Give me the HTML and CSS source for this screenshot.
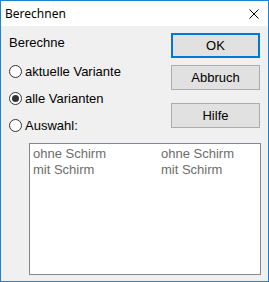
FILE: index.html
```html
<!DOCTYPE html>
<html lang="de">
<head>
  <meta charset="UTF-8" />
  <title>Berechnen</title>
  <link rel="stylesheet" href="styles.css">
</head>
<body>
  <div class="window">
    <div class="titlebar">
      <span class="title">Berechnen</span>
      <svg class="close" width="10" height="10" viewBox="0 0 10 10">
        <path d="M0.5 0.5 L9.5 9.5 M9.5 0.5 L0.5 9.5" stroke="#000" stroke-width="1" fill="none"/>
      </svg>
    </div>

    <div class="content">
      <div class="top">
        <div class="options">
          <div class="label">Berechne</div>
          <div class="radios">
            <div class="radio"><span class="circle"></span><span>aktuelle Variante</span></div>
            <div class="radio"><span class="circle checked"></span><span>alle Varianten</span></div>
            <div class="radio"><span class="circle"></span><span>Auswahl:</span></div>
          </div>
        </div>
        <div class="buttons">
          <button class="btn default">OK</button>
          <button class="btn">Abbruch</button>
          <button class="btn help">Hilfe</button>
        </div>
      </div>

      <div class="listbox">
        <span>ohne Schirm</span><span>ohne Schirm</span>
        <span>mit Schirm</span><span>mit Schirm</span>
      </div>
    </div>
  </div>
</body>
</html>
```

FILE: styles.css
```css
* {
  box-sizing: border-box;
}
body {
  margin: 0;
  font-family: 'Liberation Sans', Arial, sans-serif;
  font-size: 13px;
  line-height: 16px;
  color: #000;
}
.window {
  width: 269px;
  height: 282px;
  border: 1px solid #1883d7;
  background: #f0f0f0;
  display: flex;
  flex-direction: column;
}
.titlebar {
  height: 25px;
  background: #fff;
  display: flex;
  align-items: center;
  justify-content: space-between;
  padding: 0 9px 0 4px;
}
.title {
  font-family: 'Noto Sans', sans-serif;
  font-size: 12px;
  line-height: 16px;
  margin-top: 1px;
}
.close {
  display: block;
  margin-top: 1px;
}
.content {
  padding: 7px 7px 0 8px;
}
.top {
  display: flex;
  justify-content: space-between;
}
.options {
  margin-top: 2px;
}
.radios {
  margin-top: 13px;
  display: flex;
  flex-direction: column;
  gap: 11px;
}
.radio {
  display: flex;
  align-items: flex-start;
  gap: 3px;
}
.circle {
  width: 13px;
  height: 13px;
  margin-top: 1px;
  border: 1px solid #333;
  border-radius: 50%;
  background: #fff;
  display: flex;
  align-items: center;
  justify-content: center;
}
.circle.checked::after {
  content: "";
  width: 7px;
  height: 7px;
  border-radius: 50%;
  background: #333;
}
.buttons {
  display: flex;
  flex-direction: column;
  gap: 7px;
  margin-right: 1px;
}
.btn {
  width: 89px;
  height: 25px;
  padding: 0;
  font-family: 'Liberation Sans', Arial, sans-serif;
  font-size: 13px;
  color: #000;
  background: #e1e1e1;
  border: 1px solid #adadad;
}
.btn.default {
  border: 2px solid #0078d7;
}
.btn.help {
  margin-top: 6px;
}
.listbox {
  margin: 9px 0 0 20px;
  height: 132px;
  background: #fff;
  border: 1px solid #828790;
  padding: 2px 3px;
  display: grid;
  grid-template-columns: 128px 1fr;
  align-content: start;
  color: #6d6d6d;
}
```
